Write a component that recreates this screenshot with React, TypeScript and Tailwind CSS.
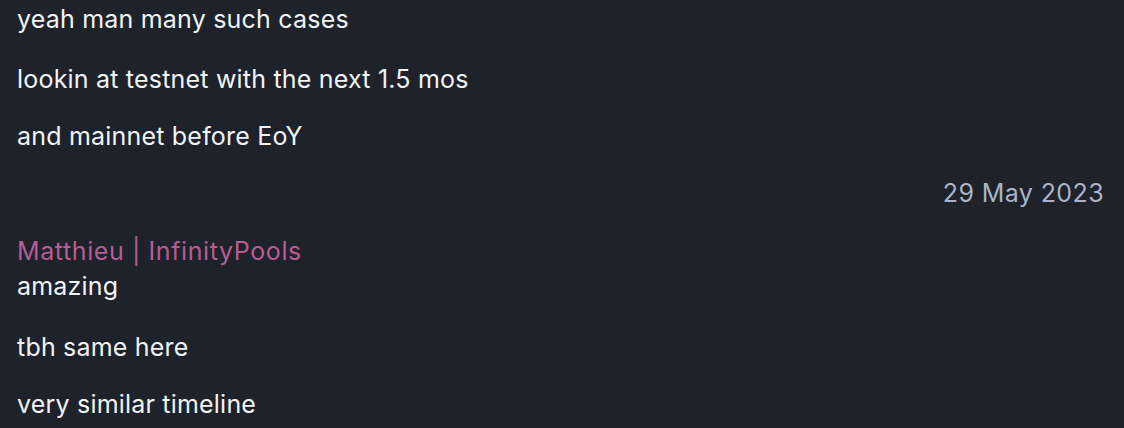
import React from 'react';

export default function App() {
  return (
    <div
      className="w-[1124px] h-[428px] overflow-hidden bg-[#1d222b] px-[17px] pt-[4px] text-[25px] leading-[30px] tracking-[0.2px] text-[#f2f3f5]"
      style={{ fontFamily: 'Inter, "Noto Sans", sans-serif' }}
    >
      <div className="flex flex-col">
        <div>yeah man many such cases</div>
        <div className="mt-[30px]">lookin at testnet with the next 1.5 mos</div>
        <div className="mt-[27px]">and mainnet before EoY</div>
      </div>
      <div className="mt-[27px] flex justify-end pr-[3px] text-[#a9b4c6] tracking-[0.4px]">
        29 May 2023
      </div>
      <div className="mt-[28px] flex flex-col">
        <div className="text-[#b85c91] tracking-[0.6px]">Matthieu | InfinityPools</div>
        <div className="mt-[5px]">amazing</div>
        <div className="mt-[31px]">tbh same here</div>
        <div className="mt-[27px]">very similar timeline</div>
      </div>
    </div>
  );
}
